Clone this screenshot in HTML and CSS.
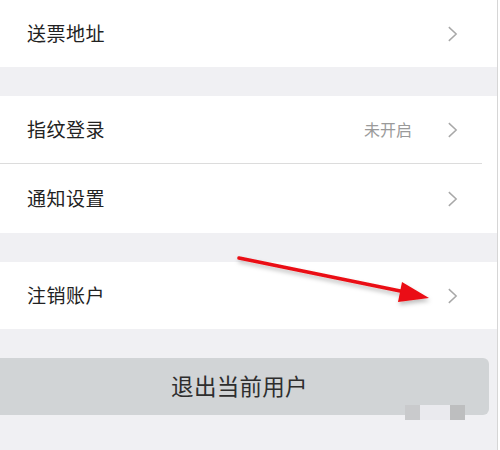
FILE: index.html
```html
<!DOCTYPE html>
<html lang="zh">
<head>
<meta charset="utf-8">
<link rel="stylesheet" href="styles.css">
</head>
<body>
<div class="page">
  <div class="group">
    <div class="row">
      <span class="label">送票地址</span>
      <span class="right"><svg class="chev" viewBox="0 0 12 18"><path d="M2 1.5 L10 9 L2 16.5"/></svg></span>
    </div>
  </div>
  <div class="group">
    <div class="row">
      <span class="label">指纹登录</span>
      <span class="right"><span class="value">未开启</span><svg class="chev" viewBox="0 0 12 18"><path d="M2 1.5 L10 9 L2 16.5"/></svg></span>
    </div>
    <div class="divider"></div>
    <div class="row tall">
      <span class="label">通知设置</span>
      <span class="right"><svg class="chev" viewBox="0 0 12 18"><path d="M2 1.5 L10 9 L2 16.5"/></svg></span>
    </div>
  </div>
  <div class="group">
    <div class="row">
      <span class="label">注销账户</span>
      <span class="right"><svg class="chev" viewBox="0 0 12 18"><path d="M2 1.5 L10 9 L2 16.5"/></svg></span>
    </div>
  </div>
  <div class="logout">退出当前用户</div>

  <svg class="arrow" width="500" height="450" viewBox="0 0 500 450">
    <defs>
      <filter id="sh" x="-10%" y="-10%" width="120%" height="140%">
        <feDropShadow dx="1" dy="3" stdDeviation="2" flood-color="#000" flood-opacity="0.25"/>
      </filter>
    </defs>
    <g filter="url(#sh)">
      <line x1="239" y1="258" x2="410" y2="293" stroke="#ea0e12" stroke-width="3.6" stroke-linecap="round"/>
      <polygon points="429,298 402,282 398,302" fill="#ea0e12"/>
    </g>
  </svg>
  <div class="mosaic m1"></div>
  <div class="mosaic m2"></div>
  <div class="mosaic m3"></div>
</div>
</body>
</html>
```

FILE: styles.css
```css
html, body {
  margin: 0;
  padding: 0;
  background: #ffffff;
}
body {
  width: 500px;
  height: 450px;
  overflow: hidden;
  font-family: "Noto Sans CJK SC", "Liberation Sans", sans-serif;
}
.page {
  position: relative;
  width: 497px;
  height: 450px;
  background: #f0f0f3;
  border-right: 1px solid #d6d6d6;
  display: flex;
  flex-direction: column;
  gap: 29px;
}
.group {
  background: #ffffff;
  display: flex;
  flex-direction: column;
}
.row {
  height: 67px;
  display: flex;
  align-items: center;
  justify-content: space-between;
  padding: 0 39px 0 27px;
}
.row.tall {
  height: 69px;
}
.label {
  font-size: 19px;
  line-height: 1;
  color: #222222;
  letter-spacing: 0.5px;
  margin-bottom: 3px;
}
.right {
  display: flex;
  align-items: center;
  gap: 35px;
}
.value {
  font-size: 16px;
  line-height: 1;
  color: #9a9a9a;
  margin-bottom: 2px;
}
.chev {
  width: 11px;
  height: 18px;
  display: block;
}
.chev path {
  fill: none;
  stroke: #a8a8a8;
  stroke-width: 1.6;
}
.divider {
  height: 1px;
  background: #dcdcdc;
  margin-right: 15px;
}
.logout {
  height: 57px;
  width: 489px;
  background: #d1d4d6;
  border-radius: 0 6px 6px 0;
  display: flex;
  align-items: center;
  justify-content: center;
  font-size: 22.5px;
  line-height: 1;
  color: #2e2e2e;
  letter-spacing: 0.3px;
  padding: 0 10px 3px 0;
  box-sizing: border-box;
}
.arrow {
  position: absolute;
  left: 0;
  top: 0;
  pointer-events: none;
}
.mosaic {
  position: absolute;
  width: 15px;
  height: 15px;
}
.m1 { left: 405px; top: 405px; background: #c9cacc; }
.m2 { left: 450px; top: 405px; background: #bdbebf; }
.m3 { left: 420px; top: 405px; width: 30px; background: #eaeaee; }
```
